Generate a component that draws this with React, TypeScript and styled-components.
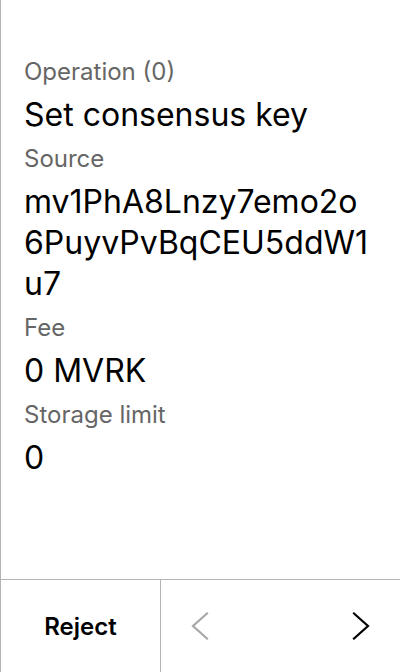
import React from "react";
import styled, { createGlobalStyle } from "styled-components";

const Global = createGlobalStyle`
  html, body { margin: 0; padding: 0; background: #fff; }
  body { font-family: Inter, "Noto Sans", sans-serif; }
`;

const Screen = styled.div`
  width: 400px;
  height: 672px;
  box-sizing: border-box;
  border-left: 1px solid #b3b3b3;
  display: flex;
  flex-direction: column;
  background: #fff;
`;

const Content = styled.div`
  flex: 1;
  padding: 57px 24px 0 23px;
  display: flex;
  flex-direction: column;
  gap: 9px;
`;

const Field = styled.div`
  display: flex;
  flex-direction: column;
  gap: 7px;
`;

const Label = styled.div`
  font-size: 24px;
  line-height: 30px;
  color: #666;
  font-weight: 400;
`;

const Value = styled.div`
  font-size: 32px;
  line-height: 41px;
  color: #000;
  font-weight: 400;
  word-break: break-all;
`;

const Footer = styled.div`
  height: 92px;
  border-top: 1px solid #b3b3b3;
  display: flex;
`;

const RejectButton = styled.div`
  width: 159px;
  border-right: 1px solid #b3b3b3;
  display: flex;
  align-items: center;
  justify-content: center;
  font-size: 24px;
  font-weight: 600;
  color: #000;
`;

const Nav = styled.div`
  flex: 1;
  display: flex;
  justify-content: space-between;
  align-items: center;
`;

const NavButton = styled.div`
  width: 78px;
  display: flex;
  align-items: center;
  justify-content: center;
`;

const Chevron = ({ dir, color }: { dir: "left" | "right"; color: string }) => (
  <svg width="18" height="28" viewBox="0 0 18 28" fill="none">
    <path
      d={dir === "left" ? "M16 1.5 L2 14 L16 26.5" : "M2 1.5 L16 14 L2 26.5"}
      stroke={color}
      strokeWidth="2.2"
      strokeLinecap="square"
    />
  </svg>
);

const fields = [
  { label: "Operation (0)", value: "Set consensus key" },
  { label: "Source", value: "mv1PhA8Lnzy7emo2o6PuyvPvBqCEU5ddW1u7" },
  { label: "Fee", value: "0 MVRK" },
  { label: "Storage limit", value: "0" },
];

export default function App() {
  return (
    <>
      <Global />
      <Screen>
        <Content>
          {fields.map((f) => (
            <Field key={f.label}>
              <Label>{f.label}</Label>
              <Value>{f.value}</Value>
            </Field>
          ))}
        </Content>
        <Footer>
          <RejectButton>Reject</RejectButton>
          <Nav>
            <NavButton>
              <Chevron dir="left" color="#a8a8a8" />
            </NavButton>
            <NavButton>
              <Chevron dir="right" color="#000" />
            </NavButton>
          </Nav>
        </Footer>
      </Screen>
    </>
  );
}
